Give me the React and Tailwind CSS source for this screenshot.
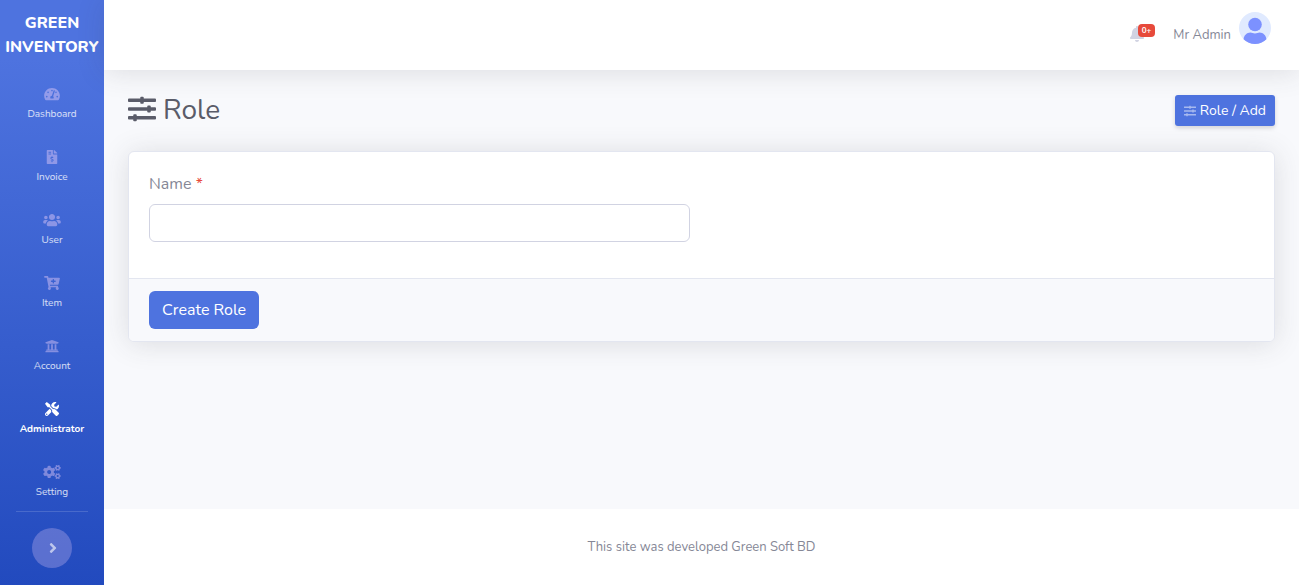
import {
  FaTachometerAlt,
  FaFileInvoiceDollar,
  FaUsers,
  FaCartPlus,
  FaUniversity,
  FaTools,
  FaCogs,
  FaAngleRight,
  FaBell,
  FaSlidersH,
} from "react-icons/fa";

const navItems = [
  { label: "Dashboard", Icon: FaTachometerAlt, size: "h-3.5 w-4" },
  { label: "Invoice", Icon: FaFileInvoiceDollar, size: "h-3.5 w-3.5" },
  { label: "User", Icon: FaUsers, size: "h-3.5 w-[18px]" },
  { label: "Item", Icon: FaCartPlus, size: "h-3.5 w-4" },
  { label: "Account", Icon: FaUniversity, size: "h-3.5 w-3.5" },
  { label: "Administrator", Icon: FaTools, size: "h-3.5 w-3.5", active: true },
  { label: "Setting", Icon: FaCogs, size: "h-3.5 w-[18px]" },
];

function NavItem({ label, Icon, size, active }) {
  return (
    <li>
      <a
        href="#"
        aria-current={active ? "page" : undefined}
        className={
          active
            ? "flex h-[63px] flex-col items-center gap-[5px] pt-[17px] text-[10px] leading-4 font-bold text-white"
            : "flex h-[63px] flex-col items-center gap-[5px] pt-[17px] text-[10px] leading-4 text-white/80"
        }
      >
        <span className={active ? "text-white" : "text-[#ffdcff]/40"}>
          <Icon className={size} />
        </span>
        <span>{label}</span>
      </a>
    </li>
  );
}

function Sidebar() {
  return (
    <aside className="flex w-[104px] shrink-0 flex-col bg-linear-to-b from-[#4e73df] from-10% to-[#224abe]">
      <a
        href="#"
        className="flex h-[70px] items-center justify-center text-center text-base leading-6 font-extrabold text-white"
      >
        GREEN
        <br />
        INVENTORY
      </a>
      <nav>
        <ul>
          {navItems.map((item) => (
            <NavItem key={item.label} {...item} />
          ))}
        </ul>
      </nav>
      <hr className="mx-4 mb-4 border-white/15" />
      <button
        type="button"
        aria-label="Expand sidebar"
        className="flex size-10 items-center justify-center self-center rounded-full bg-[#ffdcff]/25 pl-0.5 text-white/60"
      >
        <FaAngleRight className="size-4" />
      </button>
    </aside>
  );
}

function Avatar() {
  return (
    <svg viewBox="0 0 32 32" className="size-8" aria-hidden="true">
      <circle cx="16" cy="16" r="16" fill="#e0eaff" />
      <circle cx="16" cy="12.5" r="6.8" fill="#7c91ff" />
      <path
        d="M4.6 27.2C5 23.4 8 20.6 11.4 20.6c1.6 0 2.6.9 4.6.9s3-.9 4.6-.9c3.4 0 6.4 2.8 6.8 6.6A16 16 0 0 1 16 32 16 16 0 0 1 4.6 27.2Z"
        fill="#7c91ff"
      />
    </svg>
  );
}

function Topbar() {
  return (
    <header className="relative flex h-[70px] items-start justify-end gap-[18px] bg-white pt-3 pr-7 shadow-[0_2px_28px_rgba(58,59,69,0.15)]">
      <button type="button" aria-label="Notifications" className="relative mt-3 flex h-5 w-[26px] items-center text-[#d1d3e2]">
        <FaBell className="size-4" />
        <span className="absolute top-0 right-0 rounded bg-[#e74a3b] px-1 text-[8px] leading-[13px] font-bold text-white">
          0+
        </span>
      </button>
      <a href="#" className="flex items-end gap-2 text-[13px] leading-[18px] text-[#858796]">
        <span>Mr Admin</span>
        <Avatar />
      </a>
    </header>
  );
}

export default function App() {
  return (
    <div className="flex min-h-screen bg-[#f8f9fc] font-['Nunito','Lato',sans-serif] text-base text-[#858796]">
      <Sidebar />
      <div className="flex min-w-0 flex-1 flex-col">
        <Topbar />
        <main className="flex-1 px-6 pt-6">
          <div className="mb-6 flex items-center justify-between">
            <h1 className="flex items-center gap-[7px] text-[28px] leading-[33px] text-[#5a5c69]">
              <FaSlidersH className="mb-1 size-7" />
              Role
            </h1>
            <a
              href="#"
              className="flex h-[31px] items-center gap-1 rounded-[3px] bg-[#4e73df] px-[9px] text-sm text-white shadow-[0_2px_4px_rgba(58,59,69,0.2)]"
            >
              <FaSlidersH className="size-3 text-white/50" />
              Role / Add
            </a>
          </div>
          <form className="overflow-hidden rounded-md border border-[#e3e6f0] bg-white shadow-[0_2px_28px_rgba(58,59,69,0.15)]">
            <div className="grid grid-cols-2 gap-6 px-5 pt-5 pb-9">
              <div>
                <label htmlFor="role-name" className="mb-2 block">
                  Name <span className="text-[#e74a3b]">*</span>
                </label>
                <input
                  id="role-name"
                  type="text"
                  required
                  className="block h-[38px] w-full rounded-md border border-[#d1d3e2] bg-white px-3 outline-none"
                />
              </div>
            </div>
            <div className="border-t border-[#e3e6f0] bg-[#f8f9fc] px-5 py-3">
              <button type="submit" className="h-[38px] rounded-md bg-[#4e73df] px-[13px] text-white">
                Create Role
              </button>
            </div>
          </form>
        </main>
        <footer className="bg-white py-7 text-center text-[13px] leading-5">
          This site was developed Green Soft BD
        </footer>
      </div>
    </div>
  );
}
